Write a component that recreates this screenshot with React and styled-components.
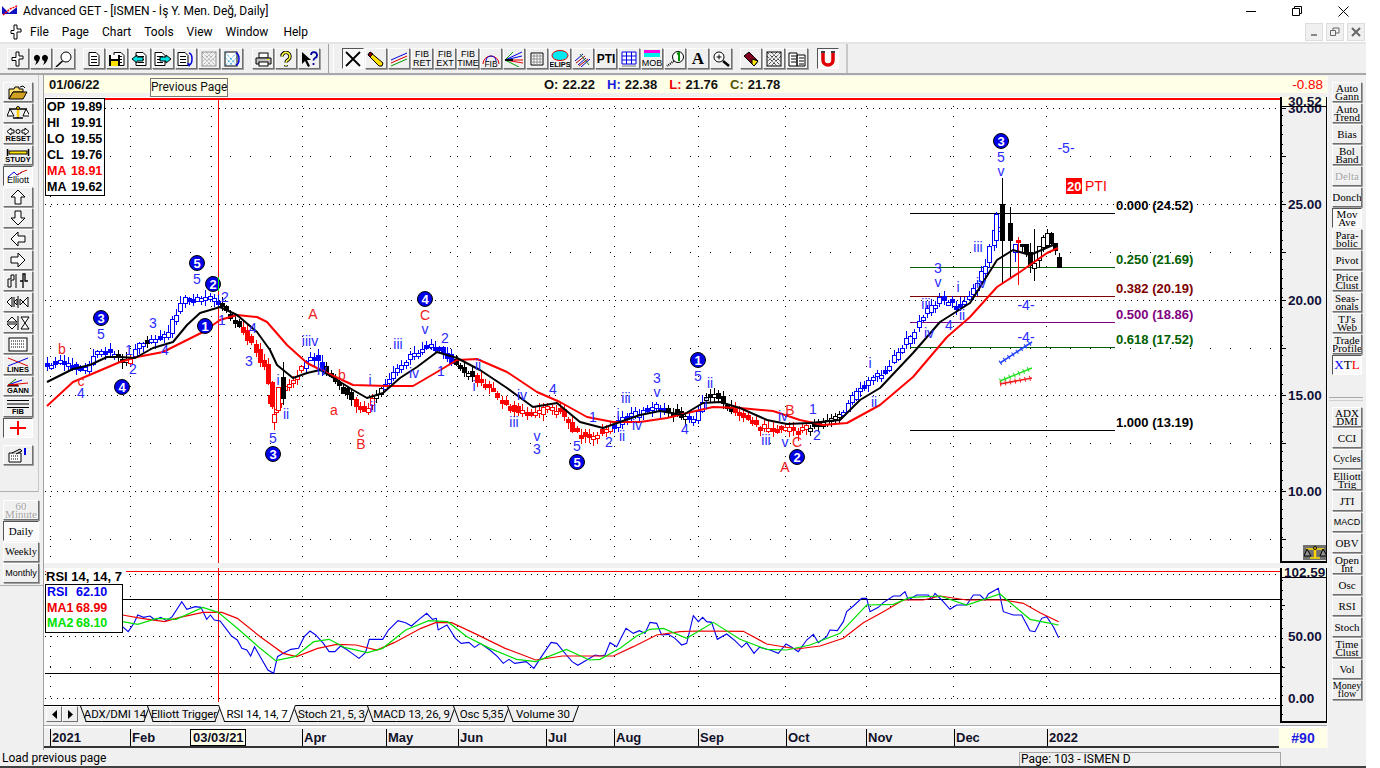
import React from 'react'
import styled, { createGlobalStyle } from 'styled-components'

const GlobalStyle = createGlobalStyle`
  html, body { margin: 0; padding: 0; background: #fff; }
  body { font-family: Roboto, "Noto Sans", sans-serif; overflow: hidden; }
`

const SANS = '"Liberation Sans", Arial, sans-serif'
const SERIF = '"Liberation Serif", "Times New Roman", serif'
const UI = 'Roboto, "Noto Sans", sans-serif'

// ---------- window frame ----------
const Page = styled.div`
  width: 1366px;
  height: 768px;
  display: flex;
  flex-direction: column;
  overflow: hidden;
  background: #f0f0f0;
  border-bottom: 2px solid #404040;
  box-sizing: border-box;
`
const TitleBar = styled.div`
  height: 22px;
  flex: none;
  background: #fff;
  display: flex;
  align-items: center;
  padding-left: 2px;
  font: 12px ${UI};
  color: #000;
`
const TitleText = styled.span`
  margin-left: 5px;
  flex: 1;
`
const WinBtn = styled.div`
  width: 46px;
  height: 22px;
  display: flex;
  align-items: center;
  justify-content: center;
`
const MenuBar = styled.div`
  height: 20px;
  flex: none;
  background: #fff;
  display: flex;
  align-items: center;
  padding-left: 9px;
  font: 12px ${UI};
  border-bottom: 2px solid #e4e4e4;
`
const MenuItem = styled.span`
  margin-left: ${(p) => p.$ml || 13}px;
`
const MdiGroup = styled.div`
  margin-left: auto;
  margin-right: 1px;
  display: flex;
  gap: 3px;
`
const MdiBtn = styled.div`
  width: 16px;
  height: 16px;
  background: #f0f0f0;
  border: 1px solid #ddd;
  display: flex;
  align-items: center;
  justify-content: center;
`
const Toolbar = styled.div`
  height: 31px;
  flex: none;
  display: flex;
  align-items: center;
  padding-left: 7px;
  border-bottom: 2px solid #a8a8a8;
  box-sizing: border-box;
`
const ToolGroup = styled.div`
  display: flex;
  gap: 1px;
  margin-left: ${(p) => p.$ml || 0}px;
`
const ToolFrame = styled.div`
  display: flex;
  align-items: center;
  height: 100%;
  margin-left: 8px;
  width: 520px;
  padding-left: 13px;
  box-sizing: border-box;
  border-left: 1px solid #a0a0a0;
  box-shadow: inset 4px 0 0 #f0f0f0, inset 5px 0 0 #fff;
  border-right: 2px solid #c8c8c8;
`
const ToolBtn = styled.div`
  width: 22px;
  height: 21px;
  box-sizing: border-box;
  border: 1px solid;
  border-color: ${(p) => (p.$pressed ? '#555 #fff #fff #555' : '#fff #707070 #707070 #fff')};
  box-shadow: ${(p) => (p.$pressed ? 'none' : '1px 1px 0 #a0a0a0')};
  background: ${(p) => (p.$pressed ? '#fafafa' : '#f0f0f0')};
  display: flex;
  align-items: center;
  justify-content: center;
  font: 9px/9px ${SANS};
  text-align: center;
  color: #000;
`
const PtiLabel = styled.span`
  font: bold 12px ${SANS};
`
const SerifGlyph = styled.span`
  font: bold 17px ${SERIF};
`
const Body = styled.div`
  flex: 1;
  display: flex;
  min-height: 0;
`

// ---------- left side ----------
const LeftBar = styled.div`
  width: 44px;
  flex: none;
  display: flex;
  flex-direction: column;
  border-right: 1px solid #a0a0a0;
  box-sizing: border-box;
`
const LeftTools = styled.div`
  height: 417px;
  flex: none;
  width: 39px;
  box-sizing: border-box;
  padding: 7px 0 0 3px;
  border-right: 1px solid #c8c8c8;
  border-bottom: 1px solid #b0b0b0;
  display: flex;
  flex-direction: column;
`
const FrameBtn = styled.div`
  width: ${(p) => p.$w || 30}px;
  height: 20px;
  margin-bottom: 1px;
  flex: none;
  box-sizing: border-box;
  border: 1px solid;
  border-color: ${(p) => (p.$pressed ? '#555 #fff #fff #555' : '#fff #707070 #707070 #fff')};
  box-shadow: ${(p) => (p.$pressed ? 'none' : '1px 1px 0 #a0a0a0')};
  background: ${(p) => (p.$pressed ? '#fafafa' : '#f0f0f0')};
  display: flex;
  flex-direction: column;
  align-items: center;
  justify-content: center;
  text-align: center;
  overflow: hidden;
  font: ${(p) => (p.$tiny ? '9px/8px ' + SANS : (p.$fs || 11) + 'px/8px ' + SERIF)};
  color: ${(p) => (p.$off ? '#a4a4a4' : '#000')};
  text-shadow: ${(p) => (p.$off ? '1px 1px 0 #fff' : 'none')};
  white-space: pre;
`
const Clip = styled.div`
  margin-top: 6px;
`
const Timeframes = styled.div`
  padding: 8px 0 0 3px;
  height: 94px;
  box-sizing: border-box;
  border-bottom: 1px solid #b0b0b0;
`
const LabelOnIcon = styled.span`
  font: ${(p) => (p.$plain ? '9px/7px ' + SANS : 'bold 7.5px/7px ' + SANS)};
  margin-top: -1px;
`
const Colored = styled.span`
  color: ${(p) => p.$c};
`

// ---------- center ----------
const Center = styled.div`
  width: 1283px;
  flex: none;
  display: flex;
  flex-direction: column;
`
const InfoBar = styled.div`
  height: 17px;
  margin-top: 1px;
  flex: none;
  background: #ffffe8;
  display: flex;
  align-items: center;
  padding-left: 5px;
  font: bold 13px/16px ${SANS};
  color: #111;
  position: relative;
`
const DateCell = styled.span`
  width: 495px;
`
const Quote = styled.span`
  color: ${(p) => p.$c || '#111'};
  margin-right: ${(p) => (p.$end ? 12 : 4)}px;
`
const Change = styled.span`
  margin-left: auto;
  margin-right: 4px;
  color: #f00;
  font-weight: normal;
  font-size: 13.5px;
`
const Tip = styled.div`
  position: absolute;
  left: 106px;
  top: 2px;
  height: 19px;
  width: 78px;
  box-sizing: border-box;
  background: #ffffe8;
  border: 1px solid #777;
  font: 12px/17px ${UI};
  text-align: center;
  white-space: nowrap;
  z-index: 5;
`
const ChartRow = styled.div`
  display: flex;
  margin-top: ${(p) => p.$mt}px;
  height: ${(p) => p.$h}px;
  flex: none;
  position: relative;
  background: #fff;
`
const Canvas = styled.svg`
  display: block;
  flex: none;
`
const AxisCol = styled.div`
  width: 44px;
  height: ${(p) => p.$h}px;
  flex: none;
  background: #f0f0f0;
  border-left: 2px solid #000;
  border-right: 1px solid #000;
  border-bottom: 2px solid #000;
  position: relative;
  overflow: hidden;
`
const OhlcBox = styled.div`
  position: absolute;
  left: 1px;
  top: 1px;
  width: 57px;
  background: #fff;
  border: 1px solid #000;
  padding-left: 1px;
  font: bold 12.5px/16px ${SANS};
`
const OhlcRow = styled.div`
  display: flex;
  color: ${(p) => p.$c || '#000'};
  white-space: nowrap;
`
const OhlcKey = styled.span`
  width: ${(p) => p.$w || 24}px;
`
const RsiTitle = styled.div`
  position: absolute;
  left: 2px;
  top: 0;
  height: 14px;
  padding: 2px 4px 0 0;
  overflow: hidden;
  font: bold 13px/13px ${SANS};
  background: #fff;
`
const RsiBox = styled.div`
  position: absolute;
  left: 1px;
  top: 16px;
  width: 75px;
  background: #fff;
  border: 1px solid #000;
  padding-left: 1px;
  font: bold 12.5px/15.5px ${SANS};
`
const ScaleIcon = styled.div`
  position: absolute;
  right: 0;
  bottom: 1px;
  width: 23px;
  height: 15px;
  background: #707070;
  display: flex;
  align-items: center;
  justify-content: center;
`
const TabsRow = styled.div`
  height: 17px;
  flex: none;
  display: flex;
  align-items: flex-start;
  width: 1234px;
  border-top: 1px solid #000;
  padding-left: 2px;
`
const TabNav = styled.div`
  width: 16px;
  height: 16px;
  box-sizing: border-box;
  border: 1px solid;
  border-color: #fff #707070 #707070 #fff;
  display: flex;
  align-items: center;
  justify-content: center;
`
const TabList = styled.div`
  display: flex;
  margin-left: 2px;
`
const Tab = styled.div`
  position: relative;
  z-index: ${(p) => (p.$active ? 3 : 1)};
  width: ${(p) => p.$w}px;
  height: 16px;
  margin-right: -3px;
  margin-top: ${(p) => (p.$active ? -1 : 0)}px;
  padding-top: ${(p) => (p.$active ? 1 : 0)}px;
  text-align: center;
  font: 11.5px/16px ${UI};
  letter-spacing: -0.1px;
  white-space: nowrap;
  &::before, &::after {
    content: '';
    position: absolute;
    top: 0;
    bottom: 0;
    width: 60%;
    z-index: -1;
    background: ${(p) => (p.$active ? '#fff' : '#f0f0f0')};
    border-bottom: 1px solid #000;
  }
  &::before {
    left: 0;
    border-left: 1px solid #000;
    transform: skewX(20deg);
    transform-origin: top left;
  }
  &::after {
    right: 0;
    border-right: 1px solid #000;
    transform: skewX(-20deg);
    transform-origin: top right;
  }
`
const DateRow = styled.div`
  margin-top: 3px;
  height: 20px;
  flex: none;
  display: flex;
  border-top: 2px solid #fff;
  box-shadow: 0 -1px 0 #a8a8a8;
`
const DateAxis = styled.svg`
  display: block;
  width: 1235px;
  height: 20px;
  flex: none;
`
const Corner = styled.div`
  width: 48px;
  height: 20px;
  background: #ffffe8;
  color: #2020e0;
  font: bold 14px/20px ${SANS};
  text-align: center;
  flex: none;
`
const StatusBar = styled.div`
  height: 16px;
  flex: none;
  display: flex;
  font: 12px/16px ${UI};
`
const StatusPane = styled.div`
  width: 1017px;
  padding-left: 2px;
`
const PageCell = styled.div`
  width: 262px;
  margin-top: 2px;
  box-sizing: border-box;
  border: 1px solid #a8a8a8;
  border-bottom: 0;
  padding-left: 1px;
  line-height: 13px;
`

// ---------- right side ----------
const RightBar = styled.div`
  width: 39px;
  flex: none;
  display: flex;
  flex-direction: column;
  padding: 7px 0 0 4px;
  box-sizing: border-box;
  border-left: 1px solid #f8f8f8;
`
const RightDivider = styled.div`
  width: 34px;
  margin: 21px 0 6px -3px;
  height: 2px;
  border-top: 1px solid #a8a8a8;
  border-bottom: 1px solid #d0d0d0;
  flex: none;
`

// ---------- svg text ----------
const WaveText = styled.text`
  font: ${(p) => p.$size || 14}px ${SANS};
  fill: ${(p) => p.$c || '#2a2aff'};
  text-anchor: middle;
`
const CircleText = styled.text`
  font: bold 13px ${SANS};
  fill: #fff;
  text-anchor: middle;
`
const FibText = styled.text`
  font: bold 13px ${SANS};
  fill: ${(p) => p.$c};
`
const AxisText = styled.text`
  font: bold 13.5px ${SANS};
  fill: #101038;
`
const DateText = styled.text`
  font: bold 13px ${SANS};
  fill: #101028;
`
const PtiText = styled.text`
  font: ${(p) => (p.$bold ? 'bold 13px' : '14px')} ${SANS};
  fill: ${(p) => (p.$bold ? '#fff' : '#f00')};
`

// ---------- helpers ----------
const rand = (i) => {
  const s = Math.sin(i * 12.9898) * 43758.5453
  return s - Math.floor(s)
}
const interp = (pts, x) => {
  for (let i = 1; i < pts.length; i++) {
    if (x <= pts[i][0]) {
      const [x0, y0] = pts[i - 1]
      const [x1, y1] = pts[i]
      return y0 + ((y1 - y0) * (x - x0)) / (x1 - x0)
    }
  }
  return pts[pts.length - 1][1]
}
const toPoints = (pts) => pts.map((p) => p.join(',')).join(' ')

// ---------- price chart data (page pixels) ----------
const pricePath = [
  [47, 365], [60, 362], [75, 367], [85, 368], [95, 352], [103, 348], [113, 353], [120, 360], [128, 362],
  [136, 345], [150, 340], [165, 337], [172, 320], [183, 300], [200, 297], [215, 299], [225, 312], [235, 322],
  [245, 335], [255, 350], [262, 362], [266, 365], [270, 400], [274, 418], [278, 398], [283, 388], [290, 382],
  [305, 362], [315, 357], [325, 372], [337, 385], [345, 392], [355, 405], [365, 412], [375, 395], [385, 385],
  [395, 372], [410, 355], [425, 345], [440, 346], [450, 360], [460, 368], [475, 378], [490, 388], [505, 405],
  [520, 412], [535, 412], [548, 408], [560, 412], [575, 432], [590, 435], [608, 428], [615, 425], [625, 416],
  [640, 412], [655, 405], [668, 410], [680, 415], [695, 418], [705, 395], [715, 392], [725, 408], [740, 412],
  [755, 425], [770, 428], [785, 428], [800, 428], [815, 425], [830, 420], [845, 410], [855, 390], [870, 378],
  [885, 370], [895, 355], [910, 335], [925, 312], [940, 298], [955, 305], [970, 295], [985, 265], [995, 225],
]
const colorRanges = [
  [117, 'blue'], [127, 'black'], [133, 'red'], [145, 'blue'], [149, 'black'], [218, 'blue'], [240, 'black'],
  [303, 'red'], [323, 'blue'], [353, 'black'], [373, 'red'], [384, 'black'], [453, 'blue'], [472, 'black'],
  [613, 'red'], [665, 'blue'], [687, 'black'], [704, 'blue'], [733, 'black'], [807, 'red'], [841, 'black'],
  [1000, 'blue'],
]
const candleColors = { blue: '#0000ff', black: '#000', red: '#f00' }
const candleColor = (x) => {
  const r = colorRanges.find((c) => x <= c[0])
  return candleColors[r ? r[1] : 'black']
}
const generated = []
for (let i = 0; 47 + i * 4.17 < 998; i++) {
  const x = Math.round(47 + i * 4.17)
  const open = interp(pricePath, x - 4) + (rand(i) - 0.5) * 6
  const close = interp(pricePath, x) + (rand(i + 500) - 0.5) * 6
  let top = Math.round(Math.min(open, close))
  let bot = Math.round(Math.max(open, close))
  if (bot - top < 3) bot = top + 3
  generated.push({
    x, top, bot,
    high: top - 1 - Math.round(rand(i + 90) * 6),
    low: bot + 1 + Math.round(rand(i + 190) * 6),
    filled: close > open,
    color: candleColor(x),
  })
}
// last weeks drawn one by one, the picture is easy to read there
const handCandles = [
  { x: 996, top: 214, bot: 240, high: 212, low: 248, filled: false, color: '#00f' },
  { x: 1002, top: 204, bot: 240, high: 178, low: 283, filled: true, color: '#000' },
  { x: 1010, top: 223, bot: 240, high: 207, low: 277, filled: true, color: '#000' },
  { x: 1015, top: 244, bot: 252, high: 244, low: 262, filled: false, color: '#00f' },
  { x: 1022, top: 244, bot: 246, high: 244, low: 253, filled: true, color: '#000' },
  { x: 1026, top: 244, bot: 253, high: 244, low: 257, filled: true, color: '#000' },
  { x: 1030, top: 252, bot: 265, high: 243, low: 273, filled: true, color: '#000' },
  { x: 1034, top: 263, bot: 268, high: 229, low: 281, filled: false, color: '#000' },
  { x: 1039, top: 246, bot: 260, high: 246, low: 268, filled: false, color: '#000' },
  { x: 1043, top: 237, bot: 247, high: 235, low: 252, filled: false, color: '#000' },
  { x: 1047, top: 233, bot: 245, high: 229, low: 248, filled: false, color: '#000' },
  { x: 1051, top: 233, bot: 243, high: 232, low: 246, filled: true, color: '#000' },
  { x: 1055, top: 243, bot: 250, high: 243, low: 255, filled: true, color: '#000' },
  { x: 1059, top: 257, bot: 267, high: 253, low: 267, filled: true, color: '#000' },
  { x: 1018, top: 240, bot: 242, high: 237, low: 285, filled: true, color: '#f00' },
  { x: 270, top: 395, bot: 403, high: 391, low: 403, filled: true, color: '#f00' },
  { x: 274, top: 414, bot: 422, high: 407, low: 430, filled: false, color: '#f00' },
  { x: 278, top: 387, bot: 410, high: 387, low: 412, filled: false, color: '#f00' },
  { x: 283, top: 377, bot: 398, high: 362, low: 405, filled: true, color: '#000' },
]
const candles = [...generated, ...handCandles]

const blackMa = [
  [47, 382], [73, 369], [90, 365], [107, 357], [120, 357], [135, 358], [153, 348], [173, 342], [187, 325], [200, 313],
  [220, 307], [237, 315], [257, 332], [270, 350], [277, 365], [293, 378], [307, 373], [320, 370], [337, 380],
  [353, 390], [367, 398], [383, 393], [400, 378], [417, 367], [437, 352], [457, 358], [480, 370], [507, 388],
  [533, 407], [557, 403], [580, 422], [603, 428], [620, 422], [640, 415], [660, 411], [683, 415], [703, 403],
  [720, 402], [740, 408], [767, 420], [787, 424], [810, 423], [840, 420], [860, 400], [880, 388], [913, 353],
  [940, 322], [970, 303], [997, 260], [1013, 250], [1030, 255], [1053, 245],
]
const redMa = [
  [47, 406], [73, 382], [120, 362], [137, 357], [163, 352], [203, 332], [220, 320], [237, 315], [257, 317], [267, 322],
  [287, 345], [307, 363], [327, 373], [353, 385], [387, 386], [413, 386], [437, 372], [457, 360], [477, 359],
  [507, 372], [537, 392], [560, 402], [587, 417], [613, 422], [640, 422], [667, 418], [687, 413], [713, 407],
  [740, 408], [773, 411], [800, 420], [823, 425], [847, 423], [880, 405], [913, 377], [947, 337], [970, 317],
  [997, 287], [1020, 272], [1047, 253], [1058, 248],
]
const fibs = [
  { y: 213, c: '#000', t: '0.000 (24.52)', ty: 210 },
  { y: 267, c: '#006000', t: '0.250 (21.69)', ty: 264 },
  { y: 296, c: '#800000', t: '0.382 (20.19)', ty: 293 },
  { y: 322, c: '#800080', t: '0.500 (18.86)', ty: 319 },
  { y: 347, c: '#006000', t: '0.618 (17.52)', ty: 344 },
  { y: 430, c: '#000', t: '1.000 (13.19)', ty: 427 },
]
const R = '#f02020'
const waves = [
  ['5', 101, 339], ['1', 129, 355], ['2', 133, 374], ['3', 153, 328], ['4', 165, 355], ['5', 197, 284], ['2', 225, 302],
  ['1', 222, 325], ['4', 253, 333], ['3', 249, 366], ['i', 278, 385], ['ii', 286, 419], ['5', 273, 443], ['iiiv', 310, 346],
  ['iv', 322, 375], ['i', 370, 385], ['ii', 373, 412], ['iii', 398, 349], ['v', 425, 334], ['2', 445, 343], ['iv', 414, 378],
  ['1', 441, 376], ['4', 81, 398], ['ii', 478, 370], ['i', 474, 391], ['iii', 514, 427], ['iv', 522, 400], ['4', 553, 394],
  ['v', 537, 441], ['3', 537, 454], ['1', 593, 422], ['5', 577, 451], ['2', 609, 447], ['iii', 626, 403], ['i', 618, 419],
  ['ii', 622, 441], ['iv', 637, 430], ['3', 657, 383], ['v', 657, 397], ['4', 685, 434], ['5', 698, 381], ['ii', 710, 388],
  ['i', 706, 409], ['iv', 783, 421], ['iii', 766, 445], ['v', 785, 447], ['1', 813, 414], ['2', 817, 440], ['i', 870, 368],
  ['ii', 874, 407], ['5', 1001, 162], ['v', 1001, 176], ['-5-', 1066, 153], ['3', 938, 273], ['v', 938, 287], ['iii', 978, 252],
  ['iii', 926, 309], ['i', 958, 292], ['ii', 962, 320], ['iv', 929, 338], ['4', 949, 330], ['iv', 981, 288], ['-4-', 1026, 310],
  ['-4-', 1026, 342],
  ['b', 62, 354, R], ['c', 81, 386, R], ['A', 313, 319, R], ['b', 342, 380, R], ['a', 334, 415, R], ['c', 361, 437, R],
  ['B', 361, 449, R], ['C', 425, 320, R], ['B', 790, 415, R], ['C', 797, 447, R], ['A', 785, 472, R],
]
const circles = [
  ['3', 101, 318], ['4', 122, 387], ['5', 197, 263], ['2', 213, 284], ['1', 205, 326], ['3', 273, 454], ['4', 425, 299],
  ['5', 577, 462], ['1', 698, 360], ['2', 797, 457], ['3', 1001, 141],
]
const monthGrid = [50, 130, 211, 302, 386, 457, 546, 614, 698, 785, 866, 953, 1046]

const z8 = (list) => list.map(([x, y]) => [x / 2.613, 560 + y / 3])
const z12 = (list) => list.map(([x, y]) => [600 + x / 3, 570 + y / 3])
const rsiBlue = [
  ...z8([[320, 200], [335, 215], [350, 190], [360, 165], [375, 172], [392, 168], [405, 180], [420, 172], [435, 182], [450, 170],
    [475, 125], [488, 148], [510, 140], [525, 142], [540, 178], [550, 165], [560, 180], [575, 183], [590, 205], [605, 228],
    [620, 240], [632, 265], [645, 270], [655, 288], [665, 260], [680, 290], [700, 330], [715, 340], [725, 290], [740, 280],
    [760, 268], [780, 265], [795, 230], [810, 213], [825, 225], [845, 250], [860, 275], [875, 275], [890, 258], [905, 268],
    [920, 280], [938, 295], [955, 278], [965, 238], [1000, 238], [1015, 210], [1040, 182], [1060, 188], [1075, 198], [1095, 178],
    [1115, 160], [1130, 178], [1140, 175], [1145, 210], [1168, 195], [1190, 235], [1205, 250], [1225, 247], [1240, 262],
    [1255, 250], [1280, 270], [1300, 290], [1315, 310], [1330, 298], [1345, 310], [1375, 305], [1395, 325], [1410, 298],
    [1440, 247], [1455, 250], [1480, 285], [1495, 305], [1510, 316], [1530, 302], [1555, 285]]),
  ...z12([[0, 258], [15, 255], [30, 218], [50, 230], [78, 175], [100, 190], [118, 182], [135, 190], [150, 157], [170, 160],
    [185, 195], [205, 193], [225, 205], [245, 225], [260, 220], [280, 137], [295, 155], [308, 142], [320, 155], [335, 157],
    [352, 208], [380, 192], [405, 212], [425, 232], [440, 218], [462, 250], [478, 232], [510, 240], [535, 250], [558, 222],
    [575, 232], [595, 245], [620, 210], [640, 193], [655, 218], [680, 200], [690, 180], [712, 182], [730, 155], [740, 125],
    [760, 108], [785, 85], [800, 85], [810, 125], [835, 112], [850, 98], [880, 78], [900, 78], [915, 65], [925, 90], [950, 75],
    [985, 75], [995, 88], [1005, 70], [1025, 90], [1050, 118], [1070, 105], [1100, 105], [1120, 75], [1140, 75], [1155, 90],
    [1165, 72], [1195, 55], [1210, 125], [1240, 135], [1265, 135], [1290, 182], [1305, 185], [1325, 145], [1340, 140],
    [1360, 170], [1376, 203]]),
]
const rsiRed = [
  ...z8([[320, 165], [370, 175], [430, 185], [470, 172], [530, 157], [580, 157], [620, 175], [680, 230], [740, 280], [775, 290],
    [830, 265], [880, 253], [930, 255], [985, 270], [1030, 248], [1100, 205], [1140, 187], [1180, 188], [1240, 220], [1320, 265],
    [1400, 300], [1470, 288], [1560, 288]]),
  ...z12([[0, 258], [40, 258], [100, 230], [170, 195], [240, 185], [290, 183], [430, 184], [500, 222], [590, 237], [660, 228],
    [730, 205], [790, 158], [850, 125], [910, 90], [970, 90], [1020, 78], [1100, 90], [1210, 90], [1270, 100], [1320, 128],
    [1376, 155]]),
]
const rsiGreen = [
  ...z8([[320, 185], [360, 193], [410, 175], [460, 178], [530, 142], [570, 157], [620, 205], [680, 265], [720, 302], [770, 290],
    [820, 245], [860, 238], [900, 262], [960, 278], [1000, 265], [1060, 210], [1120, 182], [1170, 185], [1220, 230], [1280, 265],
    [1350, 298], [1400, 305], [1480, 268], [1540, 300]]),
  ...z12([[0, 268], [60, 235], [110, 198], [150, 178], [190, 175], [260, 205], [340, 157], [420, 208], [500, 238], [560, 240],
    [630, 225], [720, 190], [800, 105], [880, 103], [930, 82], [1020, 78], [1100, 105], [1200, 72], [1290, 148], [1340, 158],
    [1376, 165]]),
]

// ---------- charts ----------
const Dots = ({ x1, y1, x2, y2, gap }) => (
  <line x1={x1} y1={y1} x2={x2} y2={y2} stroke="#000" strokeDasharray={`1 ${gap}`} shapeRendering="crispEdges" />
)
const Ticked = ({ x1, y1, x2, y2, c }) => (
  <>
    <line x1={x1} y1={y1} x2={x2} y2={y2} stroke={c} strokeWidth="1.5" />
    <line x1={x1} y1={y1} x2={x2} y2={y2} stroke={c} strokeWidth="5" strokeDasharray="1 4" />
  </>
)

const PriceChart = () => (
  <Canvas width="1236" height="466" viewBox="44 97 1236 466">
    {[108, 204, 300, 395, 491].map((y) => <Dots key={y} x1="45" y1={y + 0.5} x2="1280" y2={y + 0.5} gap="5" />)}
    {[156, 252, 348, 443, 539].map((y) => <Dots key={y} x1="50" y1={y + 0.5} x2="1280" y2={y + 0.5} gap="19" />)}
    {monthGrid.map((x) => <Dots key={x} x1={x + 0.5} y1="106" x2={x + 0.5} y2="563" gap="9" />)}
    <rect x="45" y="98" width="1235" height="2" fill="#ff0000" />
    <rect x="218" y="98" width="1" height="465" fill="#ff0000" />
    {fibs.map((f) => (
      <line key={f.y} x1="910" y1={f.y + 0.5} x2="1115" y2={f.y + 0.5} stroke={f.c} shapeRendering="crispEdges" />
    ))}
    {candles.map((c, i) => (
      <g key={i} stroke={c.color} shapeRendering="crispEdges">
        <line x1={c.x + 0.5} y1={c.high} x2={c.x + 0.5} y2={c.low} />
        <rect x={c.x - 1.5} y={c.top + 0.5} width="4" height={c.bot - c.top} fill={c.filled ? c.color : '#fff'} />
      </g>
    ))}
    <polyline points={toPoints(redMa)} fill="none" stroke="#f00" strokeWidth="2" strokeLinejoin="round" />
    <polyline points={toPoints(blackMa)} fill="none" stroke="#000" strokeWidth="2" strokeLinejoin="round" />
    <Ticked x1="1000" y1="363" x2="1032" y2="342" c="#2040ff" />
    <Ticked x1="1000" y1="381" x2="1032" y2="368" c="#20e020" />
    <Ticked x1="1000" y1="384" x2="1032" y2="378" c="#f02020" />
    {waves.map(([t, x, y, c], i) => <WaveText key={i} x={x} y={y} $c={c}>{t}</WaveText>)}
    {circles.map(([t, x, y], i) => (
      <g key={i}>
        <circle cx={x} cy={y} r="7.5" fill="#0000e8" stroke="#000" />
        <CircleText x={x} y={y + 4.5}>{t}</CircleText>
      </g>
    ))}
    <line x1="218.5" y1="277" x2="218.5" y2="291" stroke="#00e000" />
    {fibs.map((f) => <FibText key={f.y} x="1116" y={f.ty} $c={f.c}>{f.t}</FibText>)}
    <rect x="1066" y="178" width="16" height="16" fill="#f00" />
    <PtiText x="1067" y="191" $bold>20</PtiText>
    <PtiText x="1085" y="191">PTI</PtiText>
  </Canvas>
)

const axisTicks = (from, to) => {
  const out = []
  for (let y = from; y < to; y += 9.6) out.push(y)
  return out
}

const PriceAxis = () => (
  <Canvas width="44" height="466" viewBox="1282 97 44 466">
    {axisTicks(115, 556).map((y) => <rect key={y} x="1282" y={Math.round(y)} width="1" height="1" fill="#000" />)}
    {[108, 156, 204, 252, 300, 348, 395, 443, 491, 539].map((y) => (
      <rect key={y} x="1282" y={y} width="4" height="1" fill="#000" />
    ))}
    {[['30.00', 113], ['25.00', 209], ['20.00', 305], ['15.00', 400], ['10.00', 496]].map(([t, y]) => (
      <AxisText key={t} x="1288" y={y}>{t}</AxisText>
    ))}
    <rect x="1282" y="97" width="44" height="9" fill="#ffffe8" />
    <rect x="1282" y="106" width="44" height="1" fill="#000" />
    <AxisText x="1288" y="106">30.52</AxisText>
  </Canvas>
)

const RsiChart = () => (
  <Canvas width="1236" height="137" viewBox="44 568 1236 137">
    <Dots x1="45" y1="574.5" x2="1280" y2="574.5" gap="5" />
    <Dots x1="45" y1="636.5" x2="1280" y2="636.5" gap="5" />
    <Dots x1="45" y1="698.5" x2="1280" y2="698.5" gap="5" />
    <Dots x1="50" y1="606.5" x2="1280" y2="606.5" gap="19" />
    <Dots x1="50" y1="667.5" x2="1280" y2="667.5" gap="19" />
    {monthGrid.map((x) => <Dots key={x} x1={x + 0.5} y1="576" x2={x + 0.5} y2="700" gap="9" />)}
    <rect x="45" y="571" width="1235" height="1" fill="#ff0000" />
    <line x1="45" y1="599.5" x2="1280" y2="599.5" stroke="#000" shapeRendering="crispEdges" />
    <line x1="45" y1="673.5" x2="1280" y2="673.5" stroke="#000" shapeRendering="crispEdges" />
    <rect x="218" y="568" width="1" height="134" fill="#ff0000" />
    <polyline points={toPoints(rsiBlue)} fill="none" stroke="#0000f0" strokeWidth="1.1" />
    <polyline points={toPoints(rsiRed)} fill="none" stroke="#f00000" strokeWidth="1.2" />
    <polyline points={toPoints(rsiGreen)} fill="none" stroke="#00e000" strokeWidth="1.2" />
  </Canvas>
)

const RsiAxis = () => (
  <Canvas width="44" height="153" viewBox="1282 568 44 153">
    {axisTicks(580, 716).map((y) => <rect key={y} x="1282" y={Math.round(y)} width="1" height="1" fill="#000" />)}
    {[605, 667].map((y) => <rect key={y} x="1282" y={y} width="3" height="1" fill="#000" />)}
    <AxisText x="1288" y="641">50.00</AxisText>
    <AxisText x="1288" y="703">0.00</AxisText>
    <rect x="1282" y="568" width="44" height="9" fill="#ffffe8" />
    <rect x="1282" y="577" width="44" height="1" fill="#000" />
    <AxisText x="1284" y="577">102.59</AxisText>
  </Canvas>
)

const dateLabels = [
  ['2021', 50], ['Feb', 130], ['Apr', 302], ['May', 386], ['Jun', 458], ['Jul', 546], ['Aug', 614], ['Sep', 698],
  ['Oct', 786], ['Nov', 866], ['Dec', 954], ['2022', 1047],
]

// ---------- icons ----------
const Ico = ({ w = 18, h = 16, box, children, ...rest }) => (
  <svg width={w} height={h} viewBox={box || `0 0 ${w} ${h}`} {...rest}>{children}</svg>
)
const Cross = () => (
  <Ico><path d="M7 1h3v4h4v3h-4v7H7V9.500H3v-3h4z" fill="#fff" stroke="#000" /></Ico>
)
const Quotes = () => (
  <Ico>
    <path d="M2 7a3 3 0 1 1 5.500 1.500C7 10.500 5 13 3 14c1-2 1.500-3 1-4A3 3 0 0 1 2 7z" />
    <path d="M10 7a3 3 0 1 1 5.500 1.500C15 10.500 13 13 11 14c1-2 1.500-3 1-4a3 3 0 0 1-2-3z" />
  </Ico>
)
const Search = () => (
  <Ico><circle cx="11" cy="6" r="5" fill="#fff" stroke="#000" /><path d="M7.500 10 1 16" stroke="#000" strokeWidth="1.500" /></Ico>
)
const Doc = ({ x = 4 }) => (
  <g stroke="#000" fill="#fff">
    <path d={`M${x} 1.500h7l3 3v10h-10z`} />
    <path d={`M${x + 2} 5.500h6M${x + 2} 8.500h6M${x + 2} 11.500h6`} fill="none" />
  </g>
)
const PageIcon = () => <Ico><Doc /></Ico>
const SaveAll = () => (
  <Ico>
    <Doc x={6} />
    <rect x="1" y="4" width="11" height="11" fill="#000" />
    <rect x="3" y="10" width="7" height="5" fill="#ffe000" />
    <rect x="3" y="4" width="7" height="4" fill="#fff" />
  </Ico>
)
const PrevPage = ({ flip }) => (
  <Ico>
    <Doc x={flip ? 1 : 5} />
    <path d={flip ? 'M17 8l-5-4v2H6v4h6v2z' : 'M1 8l5-4v2h6v4H6v2z'} fill="#00e0e0" stroke="#000" />
  </Ico>
)
const DocCycle = () => (
  <Ico>
    <Doc x={1} />
    <path d="M12 2c4 1 4 11 0 12" fill="none" stroke="#0000e0" strokeWidth="1.500" />
    <path d="M10 12l2 4 2-3z" fill="#0000e0" />
  </Ico>
)
const Stipple = ({ c = '#000', op = 1 }) => (
  <Ico>
    <rect x="2" y="1" width="14" height="14" fill="none" stroke={c} opacity={op} />
    <path d="M2 1l14 14M16 1L2 15M6 1l10 10M12 1L2 11M2 5l10 10M16 5L6 15" stroke={c} strokeDasharray="1 1" opacity={op} />
  </Ico>
)
const DocBlue = () => (
  <Ico>
    <rect x="2" y="1" width="12" height="14" fill="#fff" stroke="#000" />
    <path d="M2 1l12 14M14 1L2 15M2 6l8 9M14 6l-8 9" stroke="#0090d0" strokeDasharray="1 1" />
    <path d="M13 2c4 1 4 11 0 12" fill="none" stroke="#0000e0" strokeWidth="1.500" />
  </Ico>
)
const Printer = () => (
  <Ico>
    <rect x="5" y="2" width="9" height="5" fill="#fff" stroke="#000" />
    <path d="M2 7h15v6H2z" fill="#c0c0c0" stroke="#000" />
    <rect x="5" y="11" width="9" height="4" fill="#fff" stroke="#000" />
    <rect x="13" y="8" width="2" height="1" fill="#ff0" />
  </Ico>
)
// yellow question mark with a black outline
const Hint = () => (
  <Ico>
    <path d="M5 5.500a4 4 0 1 1 6.500 3c-1.500 1-2.500 1.500-2.500 3M9 14v1.500" fill="none" stroke="#000" strokeWidth="3.400" />
    <path d="M5 5.500a4 4 0 1 1 6.500 3c-1.500 1-2.500 1.500-2.500 3M9 14v1" fill="none" stroke="#ffff40" strokeWidth="1.600" />
  </Ico>
)
const HelpArrow = () => (
  <Ico>
    <path d="M2 1v12l3-3 3 6 2-1-3-6h4z" fill="#000" />
    <path d="M11 4a3 3 0 1 1 4 3c-1 .6-1.500 1-1.500 2.500M13.500 12v2" stroke="#0000a0" strokeWidth="1.800" fill="none" />
  </Ico>
)
const XLines = () => <Ico><path d="M2 1l14 14M16 1L2 15" stroke="#000" strokeWidth="1.800" /></Ico>
const Pencil = () => (
  <Ico>
    <path d="M3 1l13 11-1 3-3 0L1 4z" fill="#ffe000" stroke="#000" />
    <path d="M3 1 1 4l2 2 3-3z" fill="#900" stroke="#000" />
  </Ico>
)
const Parallels = () => (
  <Ico><path d="M1 9 17 2" stroke="#0000e0" /><path d="M1 12 17 5" stroke="#e00000" /><path d="M1 15 17 8" stroke="#00a000" /></Ico>
)
const FibArc = () => (
  <Ico w={18} h={18}>
    <path d="M1 14a8 8 0 0 1 16 0" fill="none" stroke="#e00000" />
    <path d="M4 11a5 5 0 0 1 10 0" fill="none" stroke="#0000e0" />
    <text x="9" y="17" fontFamily={SANS} fontSize="8.500" textAnchor="middle">FIB</text>
  </Ico>
)
const Fan = () => (
  <Ico w={20}>
    <path d="M1 9 18 1M1 9 18 5" stroke="#0000e0" /><path d="M1 9H19M1 9l18 3" stroke="#e00000" /><path d="M1 9l14 7M1 9l8-8" stroke="#00a000" />
    <path d="M1 9h8" stroke="#000" strokeWidth="2" />
  </Ico>
)
const GrayGrid = () => (
  <Ico>
    <path d="M3 2h12v12H3z" fill="#fff" stroke="#000" />
    <path d="M6 2v12M9 2v12M12 2v12M3 5h12M3 8h12M3 11h12" stroke="#909090" />
  </Ico>
)
const Elips = () => (
  <Ico w={20} h={18}>
    <ellipse cx="10" cy="5.500" rx="8" ry="5" fill="#00e8f0" stroke="#e00000" />
    <text x="10" y="17" fontFamily={SANS} fontSize="7.500" fontWeight="bold" textAnchor="middle">ELIPS</text>
  </Ico>
)
const Diags = () => (
  <Ico><path d="M1 10 9 3M4 14l8-7M7 16l9-8" stroke="#0000c0" /><path d="M2 12l9-7M5 15l9-7" stroke="#b00000" /><path d="M6 3l9 11" stroke="#208020" /></Ico>
)
const BlueGrid = () => (
  <Ico>
    <path d="M2 1h14v12H2z" fill="#fff" stroke="#0000e0" />
    <path d="M6.500 1v12M11.500 1v12M2 5h14M2 9h14" stroke="#0000e0" />
    <path d="M2 15h14" stroke="#808080" />
  </Ico>
)
const Mob = () => (
  <Ico w={20} h={18}>
    <rect x="2" y="0" width="16" height="3" fill="#ff00e0" />
    <rect x="2" y="3" width="16" height="4" fill="#00f0f0" />
    <text x="10" y="16" fontFamily={SANS} fontSize="9" textAnchor="middle">MOB</text>
  </Ico>
)
const SearchOne = () => (
  <Ico w={20}>
    <circle cx="13" cy="6" r="5.500" fill="#fff" stroke="#000" />
    <path d="M12 3l2-1v8" stroke="#009000" strokeWidth="2" fill="none" />
    <path d="M9 10 2 15" stroke="#000" strokeDasharray="1 1" strokeWidth="2" />
  </Ico>
)
const SearchPlus = () => (
  <Ico>
    <circle cx="7" cy="6" r="5" fill="#fff" stroke="#000" />
    <path d="M4.500 6h5M7 3.500v5" stroke="#000" />
    <path d="M11 10l6 5" stroke="#000" strokeWidth="2.500" />
  </Ico>
)
const Eraser = () => (
  <Ico>
    <path d="M2 5l5-4 9 9-4 5z" fill="#800020" stroke="#000" />
    <path d="M10 8l6 2-4 5-2-2z" fill="#ffe800" stroke="#000" />
  </Ico>
)
const Notebook = () => (
  <Ico>
    <path d="M1 2h8v13H1zM9 4h8v11H9z" fill="#fff" stroke="#000" />
    <path d="M3 5h5M3 8h5M3 11h5M11 7h5M11 10h5M11 13h5" stroke="#000" />
  </Ico>
)
const Magnet = () => (
  <Ico w={14} h={16}>
    <path d="M2 2v7a5 5 0 0 0 10 0V2" fill="none" stroke="#e00000" strokeWidth="3.500" />
    <path d="M0 1h4M10 1h4" stroke="#000" strokeWidth="1.500" />
  </Ico>
)
const Folder = () => (
  <Ico w={20} h={15}>
    <path d="M1 4h5l1-2h4v2h4v3H5L1 14z" fill="#ffe070" stroke="#000" />
    <path d="M1 14 5 7h14l-4 7z" fill="#d0a020" stroke="#000" />
    <path d="M12 2l3-1 2 2" fill="none" stroke="#000" />
  </Ico>
)
const Scales = ({ dark }) => (
  <Ico w={22} h={14}>
    <path d="M11 1v11M6 12h10M2 3h18" stroke={dark ? '#ffe000' : '#000'} strokeWidth="1.500" />
    <path d="M11 3v8" stroke="#ffd000" strokeWidth="2.500" />
    <path d="M3 3 0 10h7zM19 3l-3 7h7z" fill={dark ? '#909090' : '#fff'} stroke="#000" />
    <circle cx="11" cy="2" r="1.500" fill="#ffd000" stroke="#000" />
  </Ico>
)
const ResetIcon = () => (
  <Ico w={24} h={9}>
    <path d="M1 4.500 5 1v2h3v3H5v2zM23 4.500 19 1v2h-3v3h3v2z" fill="#fff" stroke="#000" />
    <circle cx="12" cy="4.500" r="2" fill="#fff" stroke="#000" />
  </Ico>
)
const StudyIcon = () => (
  <Ico w={24} h={9}>
    <rect x="3" y="3" width="18" height="3" fill="#ffe000" stroke="#000" />
    <path d="M1.500 1v7M22.500 1v7" stroke="#000" strokeWidth="1.500" />
  </Ico>
)
const ElliottIcon = () => (
  <Ico w={22} h={9}>
    <path d="M1 8 7 3l3 3 5-3" fill="none" stroke="#0000e0" /><path d="M10 6l5-3 5-2" fill="none" stroke="#e00000" />
  </Ico>
)
const Arrow = ({ rot = 0 }) => (
  <Ico>
    <path d="M9 1l7 7h-4v7H6V8H2z" fill="#f8f8f8" stroke="#000" transform={`rotate(${rot} 9 8)`} />
  </Ico>
)
const UpDownBars = () => (
  <Ico w={24}>
    <path d="M2 6h3V2h3v5H5v7H2zM10 1v14" fill="none" stroke="#000" />
    <path d="M14 8h3V1h2v7h3M17 8v7" fill="none" stroke="#000" strokeWidth="1.300" />
  </Ico>
)
const HTriangles = () => (
  <Ico w={24} h={12}>
    <path d="M1 6l5-5v10zM8 1l0 10M8 6l3-3v6zM12 0v12M14 3v6l3-3zM22 1v10l-5-5z" fill="#fff" stroke="#000" />
  </Ico>
)
const VTriangles = () => (
  <Ico w={24} h={14}>
    <path d="M1 6l5-5 5 5zM1 8l5 5 5-5z" fill="#fff" stroke="#000" />
    <path d="M12 0v14" stroke="#000" />
    <path d="M15 1h8l-4 6zM15 13h8l-4-6z" fill="#fff" stroke="#000" />
  </Ico>
)
const Dotted = () => (
  <Ico w={22} h={15}>
    <rect x="2" y="1" width="18" height="13" fill="#fff" stroke="#000" />
    <path d="M4 4h14M4 7h14M4 10h14" stroke="#000" strokeDasharray="1 1" strokeWidth="1.200" />
  </Ico>
)
const LinesIcon = () => (
  <Ico w={24} h={10}><path d="M2 1l20 8" stroke="#e00000" /><path d="M2 9 22 1" stroke="#0000e0" /></Ico>
)
const GannIcon = () => (
  <Ico w={24} h={10}>
    <path d="M2 7 10 1" stroke="#008000" /><path d="M2 7 16 2" stroke="#0000e0" /><path d="M2 7l20-2" stroke="#e00000" />
    <path d="M2 7h10" stroke="#e00000" strokeWidth="2" /><path d="M1 8h12" stroke="#000" />
  </Ico>
)
const FibLines = () => (
  <Ico w={24} h={10}><path d="M1 1.500h22M1 5h22M1 8.500h22" stroke="#000" /></Ico>
)
const Plus = () => <Ico w={20} h={16}><path d="M10 1v14M2 8h16" stroke="#f00" strokeWidth="2" /></Ico>
const Clipboard = () => (
  <Ico w={22} h={16}>
    <path d="M2 6h12v9H2z" fill="#fff" stroke="#000" />
    <path d="M4 9h8M4 12h8" stroke="#000" strokeDasharray="1 1" />
    <path d="M5 6l8-4 2 2-6 3" fill="#d0d0d0" stroke="#000" />
    <path d="M18 1v7" stroke="#0000e0" strokeWidth="2" />
  </Ico>
)
const Logo = () => (
  <Ico w={16} h={12}>
    <path d="M0 1l7 7 8-6v7H0z" fill="#1010c0" />
    <path d="M1 10 8 4l7-3" fill="none" stroke="#f00" strokeWidth="1.500" strokeDasharray="2 1" />
  </Ico>
)

const TwoLine = ({ a, b }) => (
  <span>{a}<br />{b}</span>
)

const group1 = [<Cross />, <Quotes />, <Search />]
const group2 = [<PageIcon />, <SaveAll />, <PrevPage />, <PrevPage flip />, <DocCycle />, <Stipple c="#707070" op={0.7} />, <DocBlue />]
const group3 = [<Printer />, <Hint />, <HelpArrow />]
const group4 = [
  <Pencil />, <Parallels />, <TwoLine a="FIB" b="RET" />, <TwoLine a="FIB" b="EXT" />, <TwoLine a="FIB" b="TIME" />,
  <FibArc />, <Fan />, <GrayGrid />, <Elips />, <Diags />,
  <PtiLabel>PTI</PtiLabel>,
  <BlueGrid />, <Mob />, <SearchOne />,
  <SerifGlyph>A</SerifGlyph>,
  <SearchPlus />,
]
const group5 = [<Eraser />, <Stipple />, <Notebook />]

const rightTop = [
  ['Auto\nGann'], ['Auto\nTrend'], ['Bias'], ['Bol\nBand'], ['Delta', 'off'], ['Donch'], ['Mov\nAve', 'on'], ['Para-\nbolic'],
  ['Pivot'], ['Price\nClust'], ['Seas-\nonals'], ["TJ's\nWeb"], ['Trade\nProfile'],
]
const rightBottom = [
  ['ADX\nDMI'], ['CCI'], ['Cycles', null, 10], ['Elliott\nTrig'], ['JTI'], ['MACD', 'tiny'], ['OBV'], ['Open\nInt'], ['Osc'], ['RSI'],
  ['Stoch'], ['Time\nClust'], ['Vol'], ['Money\nflow', null, 10],
]

const tabs = [
  ['ADX/DMI 14', 70], ['Elliott Trigger', 74], ['RSI 14, 14, 7', 78, true], ['Stoch 21, 5, 3', 77], ['MACD 13, 26, 9', 89],
  ['Osc 5,35', 57], ['Volume 30', 72],
]

const App = () => (
  <>
    <GlobalStyle />
    <Page>
      <TitleBar>
        <Logo />
        <TitleText>Advanced GET - [ISMEN - İş Y. Men. Değ, Daily]</TitleText>
        <WinBtn><svg width="10" height="10"><path d="M0 5.500h10" stroke="#000" /></svg></WinBtn>
        <WinBtn><svg width="10" height="10"><path d="M.5 2.500h7v7h-7zM2.500 2.500v-2h7v7h-2" fill="none" stroke="#000" /></svg></WinBtn>
        <WinBtn><svg width="11" height="11"><path d="M.5.500l10 10M10.500.500l-10 10" stroke="#000" /></svg></WinBtn>
      </TitleBar>
      <MenuBar>
        <Ico w={14} h={16}><path d="M5 1h3v4h4v3H8v7H5V9.500H2v-3h3z" fill="#fff" stroke="#000" /></Ico>
        <MenuItem $ml={7}>File</MenuItem>
        <MenuItem>Page</MenuItem>
        <MenuItem>Chart</MenuItem>
        <MenuItem>Tools</MenuItem>
        <MenuItem>View</MenuItem>
        <MenuItem>Window</MenuItem>
        <MenuItem $ml={15}>Help</MenuItem>
        <MdiGroup>
          <MdiBtn><svg width="10" height="10"><path d="M2 8h6" stroke="#888" strokeWidth="2" /></svg></MdiBtn>
          <MdiBtn><svg width="10" height="10"><path d="M.5 3.500h5v5h-5zM3 3V1h6v5H6" fill="none" stroke="#666" /></svg></MdiBtn>
          <MdiBtn><svg width="10" height="10"><path d="M1 1l8 8M9 1 1 9" stroke="#666" strokeWidth="2" /></svg></MdiBtn>
        </MdiGroup>
      </MenuBar>
      <Toolbar>
        <ToolGroup>{group1.map((ic, i) => <ToolBtn key={i}>{ic}</ToolBtn>)}</ToolGroup>
        <ToolGroup $ml={8}>{group2.map((ic, i) => <ToolBtn key={i}>{ic}</ToolBtn>)}</ToolGroup>
        <ToolGroup $ml={9}>{group3.map((ic, i) => <ToolBtn key={i}>{ic}</ToolBtn>)}</ToolGroup>
        <ToolFrame>
          <ToolGroup>
            <ToolBtn $pressed><XLines /></ToolBtn>
            {group4.map((ic, i) => <ToolBtn key={i}>{ic}</ToolBtn>)}
          </ToolGroup>
          <ToolGroup $ml={8}>{group5.map((ic, i) => <ToolBtn key={i}>{ic}</ToolBtn>)}</ToolGroup>
          <ToolGroup $ml={9}><ToolBtn $pressed><Magnet /></ToolBtn></ToolGroup>
        </ToolFrame>
      </Toolbar>
      <Body>
        <LeftBar>
          <LeftTools>
            <FrameBtn><Folder /></FrameBtn>
            <FrameBtn><Scales /></FrameBtn>
            <FrameBtn><ResetIcon /><LabelOnIcon>RESET</LabelOnIcon></FrameBtn>
            <FrameBtn><StudyIcon /><LabelOnIcon>STUDY</LabelOnIcon></FrameBtn>
            <FrameBtn $pressed><ElliottIcon /><LabelOnIcon $plain>Elliott</LabelOnIcon></FrameBtn>
            <FrameBtn><Arrow /></FrameBtn>
            <FrameBtn><Arrow rot={180} /></FrameBtn>
            <FrameBtn><Arrow rot={-90} /></FrameBtn>
            <FrameBtn><Arrow rot={90} /></FrameBtn>
            <FrameBtn><UpDownBars /></FrameBtn>
            <FrameBtn><HTriangles /></FrameBtn>
            <FrameBtn><VTriangles /></FrameBtn>
            <FrameBtn><Dotted /></FrameBtn>
            <FrameBtn><LinesIcon /><LabelOnIcon>LINES</LabelOnIcon></FrameBtn>
            <FrameBtn><GannIcon /><LabelOnIcon>GANN</LabelOnIcon></FrameBtn>
            <FrameBtn><FibLines /><LabelOnIcon>FIB</LabelOnIcon></FrameBtn>
            <FrameBtn $pressed><Plus /></FrameBtn>
            <Clip><FrameBtn><Clipboard /></FrameBtn></Clip>
          </LeftTools>
          <Timeframes>
            <FrameBtn $w={36} $off>{'60\nMinute'}</FrameBtn>
            <FrameBtn $w={36} $pressed>Daily</FrameBtn>
            <FrameBtn $w={36} $fs={10.5}>Weekly</FrameBtn>
            <FrameBtn $w={36} $tiny>Monthly</FrameBtn>
          </Timeframes>
        </LeftBar>
        <Center>
          <InfoBar>
            <DateCell>01/06/22</DateCell>
            <Quote>O:</Quote><Quote $end>22.22</Quote>
            <Quote $c="#2020e0">H:</Quote><Quote $end>22.38</Quote>
            <Quote $c="#f00000">L:</Quote><Quote $end>21.76</Quote>
            <Quote $c="#555500">C:</Quote><Quote>21.78</Quote>
            <Change>-0.88</Change>
            <Tip>Previous Page</Tip>
          </InfoBar>
          <ChartRow $h={466} $mt={4}>
            <PriceChart />
            <AxisCol $h={464}>
              <PriceAxis />
              <ScaleIcon><Scales dark /></ScaleIcon>
            </AxisCol>
            <OhlcBox>
              {[['OP', '19.89'], ['HI', '19.91'], ['LO', '19.55'], ['CL', '19.76'], ['MA', '18.91', '#f00'], ['MA', '19.62']].map(([k, v, c], i) => (
                <OhlcRow key={i} $c={c}><OhlcKey>{k}</OhlcKey>{v}</OhlcRow>
              ))}
            </OhlcBox>
          </ChartRow>
          <ChartRow $h={137} $mt={5}>
            <RsiChart />
            <AxisCol $h={153}><RsiAxis /></AxisCol>
            <RsiTitle>RSI 14, 14, 7</RsiTitle>
            <RsiBox>
              {[['RSI', '62.10', '#0000f0'], ['MA1', '68.99', '#f00000'], ['MA2', '68.10', '#00e000']].map(([k, v, c]) => (
                <OhlcRow key={k} $c={c}><OhlcKey $w={29}>{k}</OhlcKey>{v}</OhlcRow>
              ))}
            </RsiBox>
          </ChartRow>
          <TabsRow>
            <TabNav><svg width="7" height="9"><path d="M6 0v9L1 4.500z" /></svg></TabNav>
            <TabNav><svg width="7" height="9"><path d="M1 0v9l5-4.500z" /></svg></TabNav>
            <TabList>
              {tabs.map(([t, w, active]) => <Tab key={t} $w={w} $active={active}>{t}</Tab>)}
            </TabList>
          </TabsRow>
          <DateRow>
            <DateAxis viewBox="44 728 1235 20">
              <rect x="44" y="746" width="1235" height="2" fill="#333" />
              {dateLabels.map(([t, x]) => (
                <g key={t}>
                  <rect x={x} y="729" width="1" height="17" fill="#000" />
                  <DateText x={x + 2} y="742">{t}</DateText>
                </g>
              ))}
              <rect x="190.5" y="729.5" width="55" height="16" fill="#ffffe8" stroke="#000" />
              <DateText x="193" y="742">03/03/21</DateText>
            </DateAxis>
            <Corner>#90</Corner>
          </DateRow>
        </Center>
        <RightBar>
          {rightTop.map(([t, state]) => (
            <FrameBtn key={t} $pressed={state === 'on'} $off={state === 'off'}>{t}</FrameBtn>
          ))}
          <FrameBtn $pressed $fs={13}>
            <span><Colored $c="#0000f0">X</Colored>T<Colored $c="#f00">L</Colored></span>
          </FrameBtn>
          <RightDivider />
          {rightBottom.map(([t, state, fs]) => <FrameBtn key={t} $tiny={state === 'tiny'} $fs={fs}>{t}</FrameBtn>)}
        </RightBar>
      </Body>
      <StatusBar>
        <StatusPane>Load previous page</StatusPane>
        <PageCell>Page: 103 - ISMEN D</PageCell>
      </StatusBar>
    </Page>
  </>
)

export default App
